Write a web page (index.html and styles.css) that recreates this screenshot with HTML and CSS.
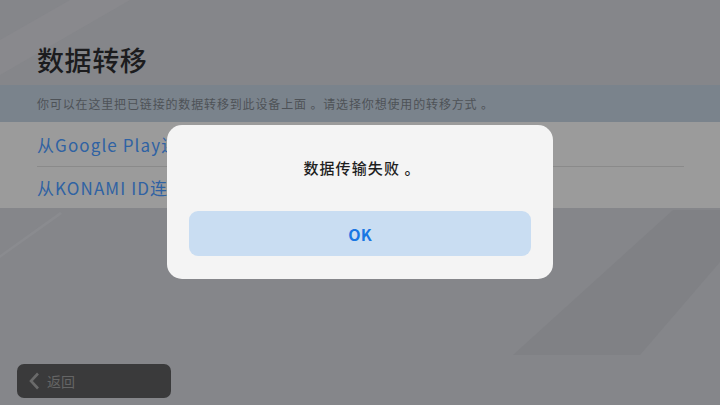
FILE: index.html
```html
<!DOCTYPE html>
<html lang="zh-CN">
<head>
<meta charset="utf-8">
<title>数据转移</title>
<link rel="stylesheet" href="styles.css">
</head>
<body>
<svg class="deco" width="720" height="405" viewBox="0 0 720 405" aria-hidden="true">
  <polygon points="0,40 70,0 130,0 0,75" fill="#89898d"/>
  <polygon points="0,255 60,212 62,214 0,258" fill="#8a8b8f"/>
  <polygon points="513,355 673,210 720,210 720,262 640,355" fill="#808185"/>
</svg>
<div class="page">
  <header class="head">
    <h1 class="title">数据转移</h1>
  </header>
  <div class="band">
    <p class="desc">你可以在这里把已链接的数据转移到此设备上面 。请选择你想使用的转移方式 。</p>
  </div>
  <div class="list">
    <div class="row">从Google Play连结转移</div>
    <div class="row">从KONAMI ID连结转移</div>
  </div>
  <div class="spacer"></div>
  <button class="back">
    <svg class="chev" width="12" height="18" viewBox="0 0 12 18"><polyline points="10,1.5 3,9 10,16.5" fill="none" stroke="#6a6a6a" stroke-width="2.6"/></svg>
    <span>返回</span>
  </button>
</div>
<div class="dialog">
  <div class="msg">数据传输失败 。</div>
  <button class="ok">OK</button>
</div>
</body>
</html>
```
FILE: styles.css
```css
* { box-sizing: border-box; }
html, body {
  margin: 0;
  padding: 0;
}
body {
  width: 720px;
  height: 405px;
  overflow: hidden;
  position: relative;
  background: #85868a;
  font-family: "Noto Sans CJK SC", "Noto Sans", sans-serif;
}
.deco {
  position: absolute;
  left: 0;
  top: 0;
}
.page {
  position: relative;
  height: 405px;
  display: flex;
  flex-direction: column;
}
.head {
  height: 85px;
  padding: 40px 0 0 37px;
}
.title {
  margin: 0;
  font-size: 27px;
  line-height: 40px;
  font-weight: 500;
  color: #1c1c1e;
  letter-spacing: 0.6px;
}
.band {
  height: 37px;
  background: #7a838c;
  display: flex;
  align-items: center;
  padding: 0 37px;
}
.desc {
  margin: 0;
  font-size: 12px;
  color: #4e5257;
  letter-spacing: 0.85px;
}
.list {
  height: 86px;
  background: #9b9b9b;
  padding: 0 36px 0 37px;
  display: flex;
  flex-direction: column;
}
.row {
  flex: 1;
  display: flex;
  align-items: center;
  font-size: 17px;
  color: #2f62a3;
  letter-spacing: 1.1px;
}
.row:first-child {
  border-bottom: 1px solid #8a8a8a;
  padding-top: 2px;
}
.spacer { flex: 1; }
.back {
  margin: 0 0 7px 17px;
  width: 154px;
  height: 34px;
  border: none;
  border-radius: 7px;
  background: #3a3a3b;
  display: flex;
  align-items: center;
  gap: 7px;
  padding: 0 0 0 11px;
  font-family: inherit;
  font-size: 14px;
  color: #656565;
}
.dialog {
  position: absolute;
  left: 167px;
  top: 125px;
  width: 386px;
  height: 154px;
  background: #f4f4f4;
  border-radius: 15px;
  display: flex;
  flex-direction: column;
  padding: 0 22px 23px;
}
.msg {
  height: 86px;
  display: flex;
  align-items: center;
  justify-content: center;
  padding: 0 0 2px 4px;
  font-size: 15px;
  font-weight: 500;
  color: #1e1e1e;
  letter-spacing: 1.1px;
}
.ok {
  height: 45px;
  border: none;
  border-radius: 9px;
  background: #c9ddf2;
  color: #1a77e3;
  font-family: "Noto Sans CJK SC", "Noto Sans", sans-serif;
  font-size: 16px;
  font-weight: 700;
}
```
